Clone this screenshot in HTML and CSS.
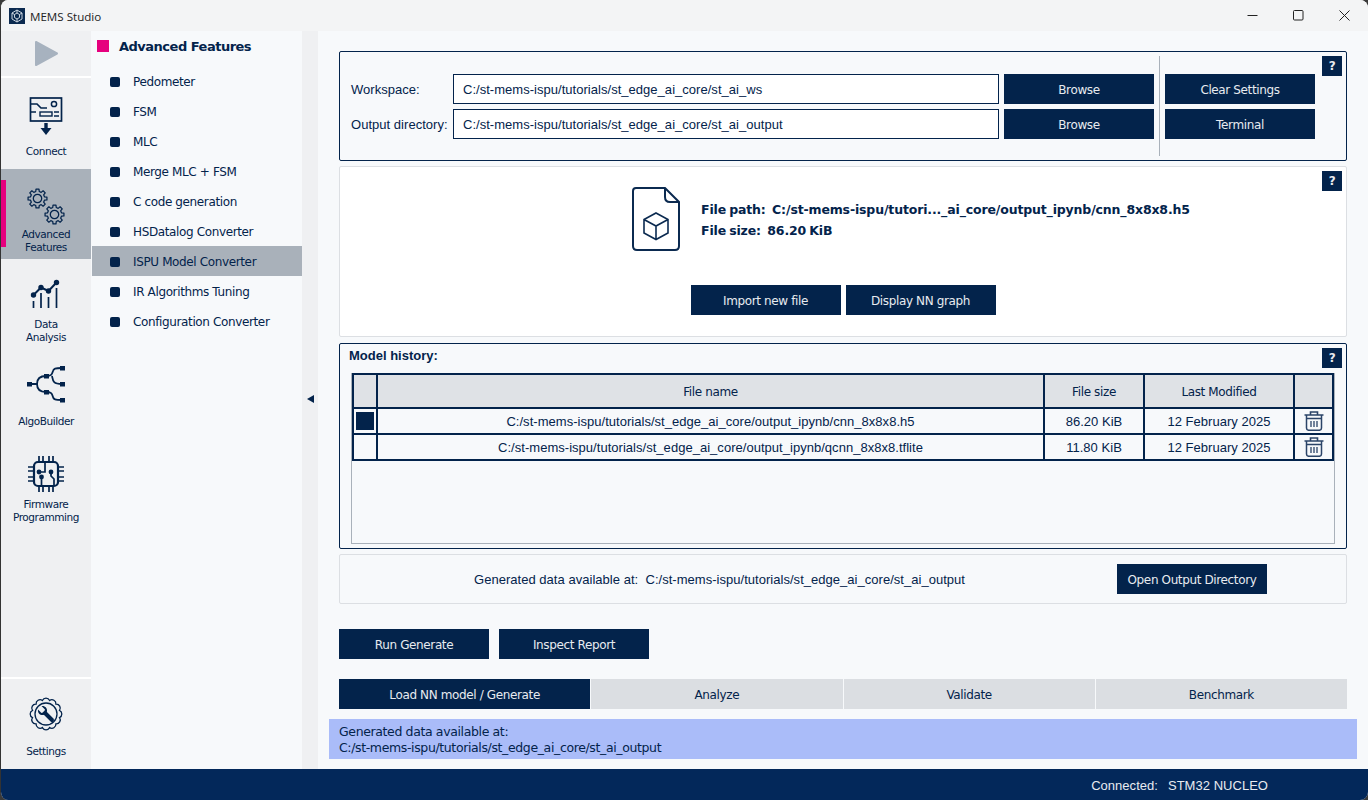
FILE: index.html
```html
<!DOCTYPE html>
<html lang="en">
<head>
    <meta charset="UTF-8">
    <title>MEMS Studio</title>
    <link rel="stylesheet" href="styles.css">
</head>
<body>
<svg class="defs" width="0" height="0">
    <symbol id="gear" viewBox="-11 -11 22 22">
        <path d="M9.88 -1.56L9.88 1.56L7.28 1.81L6.43 3.86L8.09 5.88L5.88 8.09L3.86 6.43L1.81 7.28L1.56 9.88L-1.56 9.88L-1.81 7.28L-3.86 6.43L-5.88 8.09L-8.09 5.88L-6.43 3.86L-7.28 1.81L-9.88 1.56L-9.88 -1.56L-7.28 -1.81L-6.43 -3.86L-8.09 -5.88L-5.88 -8.09L-3.86 -6.43L-1.81 -7.28L-1.56 -9.88L1.56 -9.88L1.81 -7.28L3.86 -6.43L5.88 -8.09L8.09 -5.88L6.43 -3.86L7.28 -1.81Z" fill="none" stroke="#03234b" stroke-width="1.3" stroke-linejoin="round"/>
        <circle r="4.4" fill="none" stroke="#03234b" stroke-width="1.3"/>
    </symbol>
    <symbol id="trash" viewBox="0 0 20 20">
        <path d="M0.5 4H19.5M6.500 4V1H13.500V4" fill="none" stroke="#2b4468" stroke-width="1.600"/>
        <path d="M2.500 4V17Q2.500 19.300 5 19.300H15Q17.500 19.300 17.500 17V4M2.500 7.500H17.500" fill="none" stroke="#2b4468" stroke-width="1.500"/>
        <path d="M7 10V16M10 10V16M13 10V16" fill="none" stroke="#2b4468" stroke-width="1.300"/>
    </symbol>
</svg>

<div class="window">
    <header class="titlebar">
        <svg class="app-logo" width="16" height="16" viewBox="0 0 16 16">
            <rect width="16" height="16" fill="#0b2a50"/>
            <path d="M8 2L13 5V11L8 14L3 11V5ZM8 5L5.5 6.5V9.5L8 11L10.5 9.5V6.5ZM8 2V5M13 5L10.5 6.5M3 5L5.5 6.5M8 14V11" fill="none" stroke="#dfe6ee" stroke-width="0.9"/>
        </svg>
        <span class="app-title">MEMS Studio</span>
        <div class="win-controls">
            <svg width="11" height="11" viewBox="0 0 11 11"><path d="M0.5 5.5H10.5" stroke="#222" stroke-width="1"/></svg>
            <svg width="11" height="11" viewBox="0 0 11 11"><rect x="0.5" y="0.5" width="9.5" height="9.5" rx="1" fill="none" stroke="#222" stroke-width="1"/></svg>
            <svg width="11" height="11" viewBox="0 0 11 11"><path d="M0.5 0.5L10.5 10.5M10.5 0.5L0.5 10.5" stroke="#222" stroke-width="1"/></svg>
        </div>
    </header>

    <div class="app-body">
        <!-- Left icon rail -->
        <nav class="rail">
            <div class="rail-play">
                <svg width="25" height="27" viewBox="0 0 25 27"><path d="M2 2L23 13.5L2 25Z" fill="#a7b2bf" stroke="#a7b2bf" stroke-width="2" stroke-linejoin="round"/></svg>
            </div>
            <a class="rail-item">
                <svg width="34" height="40" viewBox="0 0 34 40" fill="none" stroke="#03234b">
                    <rect x="1.5" y="1" width="31" height="23" stroke-width="1.7"/>
                    <path d="M2 7H8L12 11H18M7 15H2" stroke-width="1.7"/>
                    <circle cx="25" cy="7" r="2.6" stroke-width="1.5"/>
                    <rect x="11" y="15" width="12" height="4" stroke-width="1.4"/>
                    <path d="M25 15H30M25 19H30" stroke-width="1.4"/>
                    <path d="M17 26V32" stroke-width="3.400"/>
                    <path d="M11.500 31H22.500L17 38Z" fill="#03234b" stroke="none"/>
                </svg>
                <span>Connect</span>
            </a>
            <a class="rail-item active">
                <svg width="38" height="38" viewBox="0 0 38 38">
                    <use href="#gear" x="0" y="0" width="21" height="21"/>
                    <use href="#gear" x="17" y="16" width="21" height="21"/>
                </svg>
                <span>Advanced<br>Features</span>
            </a>
            <a class="rail-item rail-double">
                <svg width="32" height="32" viewBox="0 0 32 32" fill="none" stroke="#03234b">
                    <path d="M3.5 17L11 9.5L18.5 13L26.500 4.500" stroke-width="2"/>
                    <circle cx="3.500" cy="17" r="2.700" fill="#03234b" stroke="none"/>
                    <circle cx="11" cy="9.500" r="2.700" fill="#03234b" stroke="none"/>
                    <circle cx="18.500" cy="13" r="2.700" fill="#03234b" stroke="none"/>
                    <circle cx="26.500" cy="4.500" r="2.700" fill="#03234b" stroke="none"/>
                    <path d="M3.500 23V30M11 15V30M18.500 19V30M26.500 10V30" stroke-width="1.700"/>
                </svg>
                <span>Data<br>Analysis</span>
            </a>
            <a class="rail-item rail-algo">
                <svg width="38" height="38" viewBox="0 0 38 38" fill="none" stroke="#03234b" stroke-width="1.800">
                    <path d="M3 19H10M10 19C10 14 12 11 19 11C25 11 25 9 26 6C26.500 3.500 28 3 35 3M10 19C10 24 12 27 19 27C25 27 25 29 26 32C26.500 34.500 28 35 35 35M25 11C26 16 26 19 35 19"/>
                    <g fill="#03234b" stroke="none">
                        <rect x="0" y="17" width="5" height="4.500"/>
                        <rect x="17" y="9" width="5" height="4.500"/>
                        <rect x="17" y="25" width="5" height="4.500"/>
                        <rect x="33" y="1" width="5" height="4.500"/>
                        <rect x="33" y="17" width="5" height="4.500"/>
                        <rect x="33" y="33" width="5" height="4.500"/>
                    </g>
                </svg>
                <span>AlgoBuilder</span>
            </a>
            <a class="rail-item rail-double rail-chip">
                <svg width="36" height="36" viewBox="0 0 36 36" fill="none" stroke="#03234b">
                    <rect x="6" y="6" width="24" height="24" rx="4" stroke-width="2.200"/>
                    <path d="M11 0V5M15 0V5M21 0V5M25 0V5M11 31V36M15 31V36M21 31V36M25 31V36M0 11H5M0 15H5M0 21H5M0 25H5M31 11H36M31 15H36M31 21H36M31 25H36" stroke-width="1.700"/>
                    <path d="M11 16H17V7M23 16V20L26 23V30M13.500 21V30" stroke-width="1.700"/>
                    <circle cx="11" cy="16" r="2.400" fill="#03234b" stroke="none"/>
                    <circle cx="23" cy="16" r="2.400" fill="#03234b" stroke="none"/>
                    <circle cx="13.500" cy="21" r="2.400" fill="#03234b" stroke="none"/>
                </svg>
                <span>Firmware<br>Programming</span>
            </a>
            <div class="rail-spacer"></div>
            <a class="rail-item rail-settings">
                <svg width="36" height="36" viewBox="-18 -18 36 36" fill="none" stroke="#03234b">
                    <path d="M13.52 3.62A4 4 0 0 1 9.900 9.900A4 4 0 0 1 3.620 13.520A4 4 0 0 1 -3.620 13.520A4 4 0 0 1 -9.900 9.900A4 4 0 0 1 -13.520 3.620A4 4 0 0 1 -13.520 -3.620A4 4 0 0 1 -9.900 -9.900A4 4 0 0 1 -3.620 -13.520A4 4 0 0 1 3.620 -13.520A4 4 0 0 1 9.900 -9.900A4 4 0 0 1 13.520 -3.620A4 4 0 0 1 13.520 3.620Z" stroke-width="1.300"/>
                    <circle r="11" stroke-width="1.300"/>
                    <path d="M-1 -1L6 6" stroke="#03234b" stroke-width="4" stroke-linecap="round"/>
                    <path d="M-8 -4.500L-4.500 -1L-2 -2L-1 -4.500L-4.500 -8C-1 -8.500 1.500 -6 1 -2.500L-2.500 1C-6 1.500 -8.500 -1 -8 -4.500Z" fill="#03234b" stroke="none"/>
                </svg>
                <span>Settings</span>
            </a>
        </nav>

        <!-- Section menu -->
        <aside class="section-nav">
            <h2 class="section-title">Advanced Features</h2>
            <ul class="section-list">
                <li>Pedometer</li>
                <li>FSM</li>
                <li>MLC</li>
                <li>Merge MLC + FSM</li>
                <li>C code generation</li>
                <li>HSDatalog Converter</li>
                <li class="selected">ISPU Model Converter</li>
                <li>IR Algorithms Tuning</li>
                <li>Configuration Converter</li>
            </ul>
        </aside>

        <div class="splitter"><span class="splitter-arrow"></span></div>

        <main class="main">
            <section class="panel panel-strong panel-workspace">
                <div class="ws-fields">
                    <div class="ws-row">
                        <label>Workspace:</label>
                        <div class="path-input">C:/st-mems-ispu/tutorials/st_edge_ai_core/st_ai_ws</div>
                        <button class="btn">Browse</button>
                    </div>
                    <div class="ws-row">
                        <label>Output directory:</label>
                        <div class="path-input">C:/st-mems-ispu/tutorials/st_edge_ai_core/st_ai_output</div>
                        <button class="btn">Browse</button>
                    </div>
                </div>
                <div class="ws-divider"></div>
                <div class="ws-actions">
                    <button class="btn">Clear Settings</button>
                    <button class="btn">Terminal</button>
                </div>
                <span class="help">?</span>
            </section>

            <section class="panel panel-file">
                <div class="file-info">
                    <svg width="48" height="64" viewBox="0 0 48 64" fill="none" stroke="#0b2a50" stroke-width="2">
                        <path d="M4 1H33L47 15V59Q47 63 43 63H5Q1 63 1 59V4Q1 1 4 1Z"/>
                        <path d="M33 1V10Q33 15 38 15H47"/>
                        <path d="M24 26L36 32.500V46L24 52.500L12 46V32.500ZM12 32.500L24 39L36 32.500M24 39V52.500" stroke-width="1.600"/>
                    </svg>
                    <div class="file-text">
                        <div>File path:&nbsp; C:/st-mems-ispu/tutori..._ai_core/output_ipynb/cnn_8x8x8.h5</div>
                        <div>File size:&nbsp; 86.20 KiB</div>
                    </div>
                </div>
                <div class="file-actions">
                    <button class="btn">Import new file</button>
                    <button class="btn">Display NN graph</button>
                </div>
                <span class="help">?</span>
            </section>

            <section class="panel panel-strong panel-history">
                <h3 class="history-title">Model history:</h3>
                <span class="help">?</span>
                <div class="table-box">
                    <table class="history-table">
                        <thead>
                            <tr>
                                <th class="col-check"></th>
                                <th>File name</th>
                                <th class="col-size">File size</th>
                                <th class="col-date">Last Modified</th>
                                <th class="col-del"></th>
                            </tr>
                        </thead>
                        <tbody>
                            <tr>
                                <td class="check-cell"><span class="check checked"></span></td>
                                <td>C:/st-mems-ispu/tutorials/st_edge_ai_core/output_ipynb/cnn_8x8x8.h5</td>
                                <td>86.20 KiB</td>
                                <td>12 February 2025</td>
                                <td><svg class="trash" width="20" height="20"><use href="#trash"/></svg></td>
                            </tr>
                            <tr>
                                <td class="check-cell"><span class="check"></span></td>
                                <td>C:/st-mems-ispu/tutorials/st_edge_ai_core/output_ipynb/qcnn_8x8x8.tflite</td>
                                <td>11.80 KiB</td>
                                <td>12 February 2025</td>
                                <td><svg class="trash" width="20" height="20"><use href="#trash"/></svg></td>
                            </tr>
                        </tbody>
                    </table>
                </div>
            </section>

            <section class="panel panel-output">
                <span class="output-text">Generated data available at:&nbsp; C:/st-mems-ispu/tutorials/st_edge_ai_core/st_ai_output</span>
                <button class="btn">Open Output Directory</button>
            </section>

            <div class="run-actions">
                <button class="btn">Run Generate</button>
                <button class="btn">Inspect Report</button>
            </div>

            <div class="tabs">
                <button class="tab active">Load NN model / Generate</button>
                <button class="tab">Analyze</button>
                <button class="tab">Validate</button>
                <button class="tab">Benchmark</button>
            </div>

            <div class="message">Generated data available at:<br>C:/st-mems-ispu/tutorials/st_edge_ai_core/st_ai_output</div>
        </main>
    </div>

    <footer class="statusbar"><span>Connected:</span><span>STM32 NUCLEO</span></footer>
</div>
</body>
</html>
```

FILE: styles.css
```css
html, body {
    margin: 0;
    height: 100%;
    background-color: #3a3a3a;
    overflow: hidden;
}
.defs {
    position: absolute;
}
.window {
    height: 800px;
    width: 1368px;
    box-sizing: border-box;
    border-left: 1px solid #333;
    border-radius: 8px;
    overflow: hidden;
    display: flex;
    flex-direction: column;
    font-family: "DejaVu Sans", sans-serif;
    font-size: 12px;
    letter-spacing: -0.37px;
    color: #03234b;
    background-color: #f7f9fb;
}
.titlebar {
    height: 31px;
    flex: none;
    display: flex;
    align-items: center;
    padding-left: 8px;
    background-color: #f3f4f5;
}
.app-title {
    margin-left: 5px;
    padding-top: 1px;
    font-family: "Open Sans", sans-serif;
    font-size: 11.6px;
    letter-spacing: 0;
    color: #222;
}
.win-controls {
    margin-left: auto;
    display: flex;
    gap: 35px;
    padding-right: 18px;
}
.app-body {
    flex: 1;
    display: flex;
    min-height: 0;
}

/* Icon rail */
.rail {
    width: 90px;
    flex: none;
    display: flex;
    flex-direction: column;
    background-color: #eff0f2;
}
.rail-play {
    height: 45px;
    display: flex;
    align-items: center;
    justify-content: center;
    border-bottom: 2px solid #fff;
}
.rail-item {
    height: 90px;
    flex: none;
    box-sizing: border-box;
    position: relative;
    display: flex;
    flex-direction: column;
    align-items: center;
    text-align: center;
    padding-top: 19px;
    line-height: 13px;
    font-size: 10.5px;
    letter-spacing: -0.42px;
}
.rail-item svg {
    flex: none;
}
.rail-item span {
    position: absolute;
    left: 0;
    right: 0;
    top: 67px;
}
.rail-item.active {
    background-color: #a9b1ba;
    margin-top: 1px;
}
.rail-item.active span,
.rail-double span {
    top: 59px;
}
.rail-item.active::before {
    content: "";
    position: absolute;
    left: 0;
    top: 11px;
    width: 5px;
    height: 67px;
    background-color: #e6007e;
}
.rail-algo {
    padding-top: 16px;
}
.rail-algo span {
    top: 66px;
}
.rail-chip {
    padding-top: 17px;
}
.rail-spacer {
    flex: 1;
}
.rail-settings {
    border-top: 2px solid #fff;
    padding-top: 17px;
    height: 92px;
}
.rail-settings span {
    top: 66px;
}

/* Section menu */
.section-nav {
    width: 210px;
    flex: none;
    margin-left: 1px;
    background-color: #f7f9fb;
}
.section-title {
    display: flex;
    align-items: center;
    margin: 0;
    height: 30px;
    padding: 0 0 0 5px;
    font-size: 13px;
    font-weight: bold;
    letter-spacing: -0.5px;
}
.section-title::before {
    content: "";
    width: 12px;
    height: 12px;
    margin-right: 10px;
    background-color: #e6007e;
}
.section-list {
    list-style: none;
    margin: 5px 0 0;
    padding: 0;
}
.section-list li {
    height: 30px;
    box-sizing: border-box;
    display: flex;
    align-items: center;
    padding: 2px 0 0 18px;
}
.section-list li::before {
    content: "";
    width: 10px;
    height: 10px;
    margin-right: 13px;
    border-radius: 2px;
    background-color: #03234b;
}
.section-list li.selected {
    background-color: #a9b1ba;
}

.splitter {
    width: 16px;
    flex: none;
    display: flex;
    align-items: center;
    justify-content: center;
    background-color: #eff0f2;
}
.splitter-arrow {
    width: 0;
    height: 0;
    margin-bottom: 2px;
    border-top: 4px solid transparent;
    border-bottom: 4px solid transparent;
    border-right: 7px solid #03234b;
}

/* Main area */
.main {
    flex: 1;
    display: flex;
    flex-direction: column;
    padding: 20px 21px 0;
    background-color: #f7f9fb;
}
.panel {
    position: relative;
    flex: none;
    box-sizing: border-box;
    border: 1px solid #dcdfe3;
    border-radius: 2px;
}
.panel-strong {
    border-color: #03234b;
}
.help {
    position: absolute;
    top: 4px;
    right: 4px;
    width: 20px;
    height: 20px;
    display: flex;
    align-items: center;
    justify-content: center;
    background-color: #03234b;
    color: #e8ebf0;
    font-weight: bold;
    font-size: 12px;
}
.btn {
    width: 150px;
    height: 30px;
    border: 0;
    padding: 2px 0 0;
    font: inherit;
    letter-spacing: inherit;
    color: #e8ebf0;
    background-color: #03234b;
}

.panel-workspace {
    height: 110px;
    display: flex;
    padding: 4px 0 4px 11px;
}
.ws-fields {
    display: flex;
    flex-direction: column;
    gap: 5px;
    padding-top: 18px;
}
.ws-row {
    display: flex;
    align-items: center;
    height: 30px;
}
.ws-row label {
    width: 102px;
    font-family: "Liberation Sans", sans-serif;
    font-size: 13px;
    letter-spacing: 0.03px;
}
.path-input {
    width: 546px;
    height: 30px;
    box-sizing: border-box;
    display: flex;
    align-items: center;
    margin-right: 5px;
    padding-left: 9px;
    border: 1px solid #03234b;
    background-color: #fff;
    font-family: "Liberation Sans", sans-serif;
    font-size: 13px;
    letter-spacing: 0.03px;
}
.ws-divider {
    width: 1px;
    margin-left: 5px;
    background-color: #a9b1ba;
}
.ws-actions {
    display: flex;
    flex-direction: column;
    gap: 5px;
    margin-left: 5px;
    padding-top: 18px;
}

.panel-file {
    height: 171px;
    margin-top: 5px;
    background-color: #fff;
}
.file-info {
    display: flex;
    align-items: center;
    margin: 20px 0 0 292px;
    gap: 21px;
}
.file-text {
    padding-top: 2px;
    font-weight: bold;
    line-height: 21px;
    font-size: 12.500px;
    letter-spacing: -0.15px;
    word-spacing: -1px;
}
.file-actions {
    display: flex;
    justify-content: center;
    gap: 5px;
    margin-top: 34px;
}

.panel-history {
    height: 206px;
    margin-top: 6px;
}
.history-title {
    margin: 0;
    padding: 4px 0 0 9px;
    font-size: 13px;
    line-height: 15px;
    font-family: "Liberation Sans", sans-serif;
    letter-spacing: 0;
}
.table-box {
    position: absolute;
    left: 11px;
    right: 11px;
    top: 29px;
    bottom: 4px;
    border: 1px solid #a9b1ba;
    border-top: 0;
}
.history-table {
    width: 100%;
    table-layout: fixed;
    border-collapse: collapse;
    font-family: "Liberation Sans", sans-serif;
    font-size: 13px;
    letter-spacing: 0.03px;
    text-align: center;
}
.history-table th {
    height: 30px;
    padding: 2px 0 0;
    box-sizing: content-box;
    background-color: #dfe2e6;
    font-family: "DejaVu Sans", sans-serif;
    font-size: 12px;
    font-weight: normal;
    letter-spacing: -0.37px;
    border: 2px solid #03234b;
}
.history-table td {
    height: 24px;
    padding: 0;
    border: 2px solid #03234b;
}
.col-check {
    width: 22px;
}
.col-size {
    width: 98px;
}
.col-date {
    width: 148px;
}
.col-del {
    width: 37px;
}
.check-cell {
    font-size: 0;
}
.check {
    display: inline-block;
    width: 20px;
    height: 20px;
    box-sizing: border-box;
    vertical-align: middle;
}
.check.checked {
    border: 1px solid #f7f9fb;
    background-color: #03234b;
}
.trash {
    display: block;
    margin: 0 auto;
}

.panel-output {
    height: 50px;
    margin-top: 5px;
    display: flex;
    align-items: center;
}
.output-text {
    margin-left: 134px;
    font-family: "Liberation Sans", sans-serif;
    font-size: 13px;
    letter-spacing: 0.03px;
}
.panel-output .btn {
    position: absolute;
    left: 777px;
    top: 9px;
}

.run-actions {
    display: flex;
    gap: 10px;
    margin-top: 25px;
}
.tabs {
    display: flex;
    margin-top: 20px;
    gap: 1px;
}
.tab {
    flex: 1;
    height: 30px;
    border: 0;
    padding: 2px 0 0;
    font: inherit;
    letter-spacing: inherit;
    color: #03234b;
    background-color: #dbdee2;
}
.tab.active {
    color: #e8ebf0;
    background-color: #03234b;
}
.message {
    height: 40px;
    margin: 10px -10px 0;
    box-sizing: border-box;
    padding: 5px 10px;
    font-size: 12.500px;
    line-height: 16px;
    background-color: #aabcf9;
}
.statusbar {
    height: 31px;
    flex: none;
    box-sizing: border-box;
    display: flex;
    align-items: center;
    justify-content: flex-end;
    gap: 10px;
    padding: 1px 100px 0 0;
    font-family: "Liberation Sans", sans-serif;
    font-size: 13px;
    letter-spacing: 0.03px;
    color: #e8ebf0;
    background-color: #03285a;
}
```
